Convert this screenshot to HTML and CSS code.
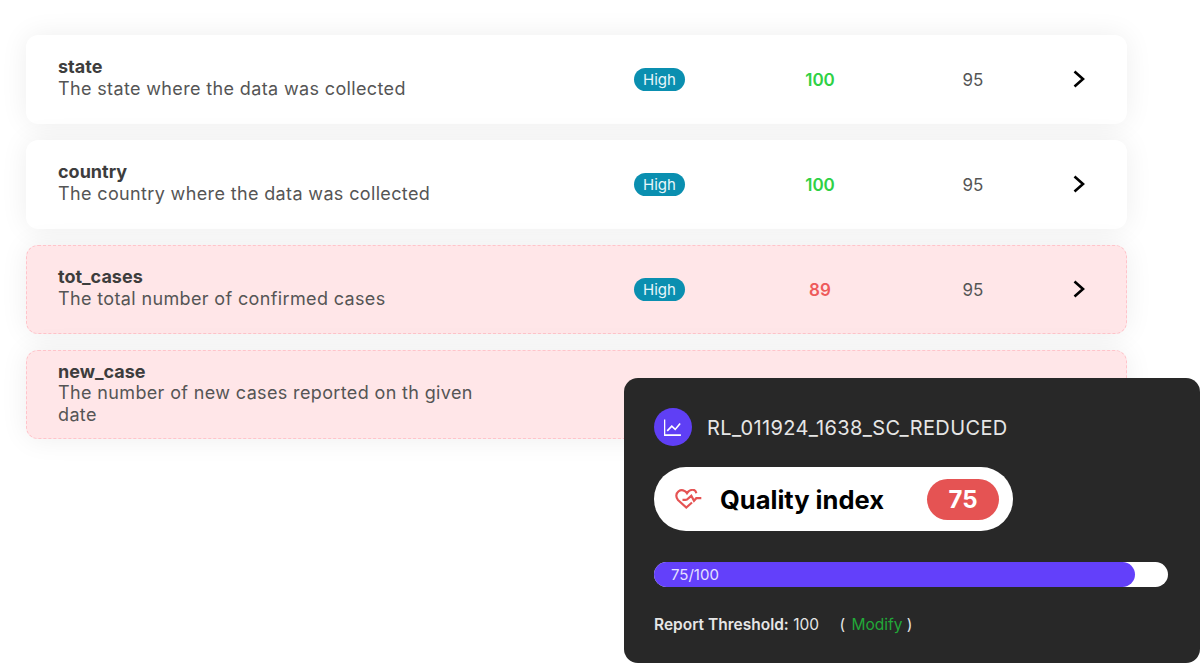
FILE: index.html
```html
<!DOCTYPE html>
<html lang="en">
<head>
    <meta charset="UTF-8">
    <meta name="viewport" content="width=device-width, initial-scale=1.0">
    <title>Quality Report</title>
    <link rel="stylesheet" href="styles.css">
</head>
<body>
    <!-- Field rows -->
    <div class="field-list">
        <div class="field-row">
            <div class="field-text">
                <div class="field-name">state</div>
                <div class="field-desc">The state where the data was collected</div>
            </div>
            <div><span class="badge">High</span></div>
            <div class="score pass">100</div>
            <div class="target">95</div>
            <svg class="chevron" viewBox="0 0 20 20"><path d="M6.5 2.5 L15 10 L6.5 17.5"/></svg>
        </div>
        <div class="field-row">
            <div class="field-text">
                <div class="field-name">country</div>
                <div class="field-desc">The country where the data was collected</div>
            </div>
            <div><span class="badge">High</span></div>
            <div class="score pass">100</div>
            <div class="target">95</div>
            <svg class="chevron" viewBox="0 0 20 20"><path d="M6.5 2.5 L15 10 L6.5 17.5"/></svg>
        </div>
        <div class="field-row failed">
            <div class="field-text">
                <div class="field-name">tot_cases</div>
                <div class="field-desc">The total number of confirmed cases</div>
            </div>
            <div><span class="badge">High</span></div>
            <div class="score fail">89</div>
            <div class="target">95</div>
            <svg class="chevron" viewBox="0 0 20 20"><path d="M6.5 2.5 L15 10 L6.5 17.5"/></svg>
        </div>
        <div class="field-row failed">
            <div class="field-text">
                <div class="field-name">new_case</div>
                <div class="field-desc">The number of new cases reported on th given date</div>
            </div>
        </div>
    </div>

    <!-- Report card -->
    <div class="report-card">
        <div class="report-title">
            <span class="report-icon">
                <svg viewBox="0 0 20 20"><path d="M.5 1.6 V18 H17.8"/><path d="M3.4 13.5 L8.2 8.6 L11.8 12 L17 5.8"/></svg>
            </span>
            <span class="report-name">RL_011924_1638_SC_REDUCED</span>
        </div>
        <div class="quality-pill">
            <svg class="heart" viewBox="0 0 27 21"><path d="M17 13.5 L11.3 18.5 L3 11 C.7 8.5 .7 4.5 3.5 2.3 C6.5 .3 10 1.2 12 4.2 C13.8 1.5 17 .2 19.5 1.2 C20.3 1.6 21 2.5 21.3 4.2"/><path d="M7.5 10.8 H10.5 L12 10.5 L16.3 6.8 L19 11.8 L21.3 9.2 H26.3"/></svg>
            <span class="quality-label">Quality index</span>
            <span class="quality-value">75</span>
        </div>
        <div class="progress">
            <div class="progress-fill" style="width: 93.6%">75/100</div>
        </div>
        <div class="threshold">
            <b>Report Threshold:</b> 100
            <span class="modify">( <a href="#">Modify</a> )</span>
        </div>
    </div>
</body>
</html>
```

FILE: styles.css
```css
/* General Styling */
body {
    margin: 0;
    height: 663px;
    overflow: hidden;
    position: relative;
    background: #ffffff;
    font-family: 'Inter', sans-serif;
    color: #333;
}

.field-list {
    display: flex;
    flex-direction: column;
    gap: 15.5px;
    width: 1101px;
    padding: 34.5px 0 0 26px;
}

.field-row {
    display: grid;
    grid-template-columns: 576px 110px 152px 154px 1fr;
    align-items: center;
    box-sizing: border-box;
    height: 89.5px;
    padding: 0 32px;
    background: #ffffff;
    border-radius: 12px;
    box-shadow: 0 0 28px rgba(0, 0, 0, 0.07);
}

.field-row.failed {
    background: #ffe6e8;
    border: 1px dashed #ffc4ca;
    padding: 0 31px;
}

.field-text {
    width: 430px;
    padding-bottom: 3px;
}

.field-name {
    font-size: 18px;
    font-weight: 700;
    line-height: 21.5px;
    color: #3d3d3d;
}

.field-desc {
    font-size: 18px;
    line-height: 21.5px;
    letter-spacing: 0.36px;
    color: #555555;
}

.badge {
    display: inline-block;
    width: 51px;
    height: 23px;
    line-height: 23px;
    text-align: center;
    font-size: 15px;
    color: #e8f6fa;
    background: #0a8fb0;
    border-radius: 12px;
}

.score,
.target {
    padding-top: 1px;
    text-align: center;
    font-size: 17px;
}

.score {
    font-weight: 600;
}

.score.pass {
    color: #2fd145;
}

.score.fail {
    color: #ee5a5a;
}

.target {
    color: #555555;
}

.chevron {
    width: 20px;
    height: 20px;
    justify-self: end;
    margin-right: 7px;
    fill: none;
    stroke: #000000;
    stroke-width: 2.6;
}

/* Report card */
.report-card {
    position: absolute;
    left: 624px;
    top: 378px;
    box-sizing: border-box;
    width: 576px;
    height: 285px;
    padding: 30px 32px 0 30px;
    background: #282828;
    border-radius: 14px;
    color: #ffffff;
}

.report-title {
    display: flex;
    align-items: center;
    gap: 15px;
    font-size: 20px;
    letter-spacing: 0.36px;
    color: #e6e6e6;
}

.report-name {
    padding-top: 2px;
}

.report-icon {
    display: flex;
    align-items: center;
    justify-content: center;
    width: 38px;
    height: 38px;
    border-radius: 50%;
    background: #5f3ff5;
}

.report-icon svg {
    width: 19px;
    height: 19px;
    fill: none;
    stroke: #ffffff;
    stroke-width: 1.7;
}

.quality-pill {
    display: flex;
    align-items: center;
    box-sizing: border-box;
    width: 359px;
    height: 64px;
    margin-top: 21px;
    padding: 0 14px 0 21px;
    background: #ffffff;
    border-radius: 32px;
    color: #000000;
}

.heart {
    width: 27px;
    height: 21px;
    fill: none;
    stroke: #e55353;
    stroke-width: 2.2;
}

.quality-label {
    margin-left: 18px;
    font-size: 25.5px;
    font-weight: 700;
}

.quality-value {
    margin-left: auto;
    width: 72px;
    height: 41px;
    line-height: 41px;
    text-align: center;
    font-size: 24px;
    font-weight: 700;
    color: #ffffff;
    background: #e55353;
    border-radius: 21px;
}

.progress {
    height: 25px;
    margin-top: 31px;
    background: #ffffff;
    border-radius: 13px;
}

.progress-fill {
    box-sizing: border-box;
    height: 100%;
    padding-left: 17px;
    line-height: 25px;
    font-size: 15px;
    color: #e6e2ff;
    background: #6340fa;
    border-radius: 13px;
}

.threshold {
    margin-top: 28px;
    font-size: 15.5px;
    color: #e6e6e6;
}

.threshold b {
    font-weight: 600;
}

.modify {
    margin-left: 16px;
}

.modify a {
    margin: 0 0 0 2px;
    color: #22a838;
    text-decoration: none;
}
```
